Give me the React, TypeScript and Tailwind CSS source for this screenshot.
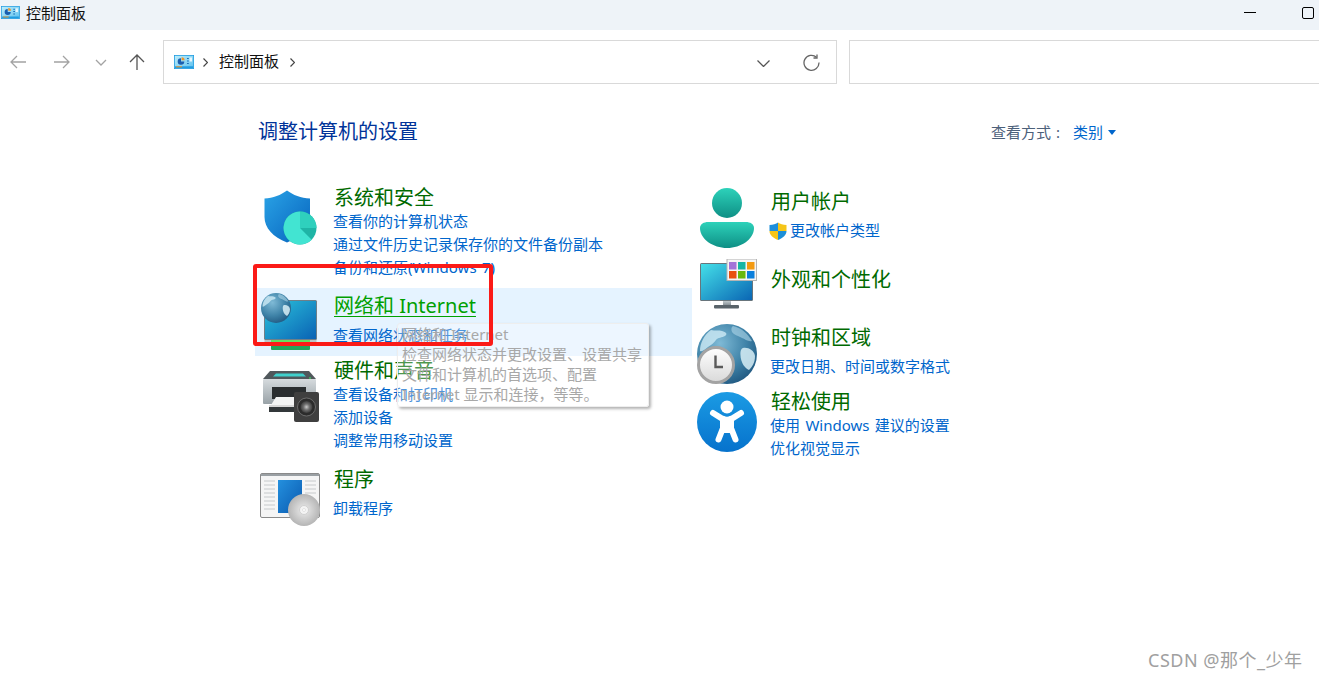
import React from "react";

const Panel = ({ id, className }: { id: string; className: string }) => (
  <svg viewBox="0 0 20 14" className={className}>
    <defs>
      <linearGradient id={id} x1="0" y1="0" x2="1" y2="1">
        <stop offset="0" stopColor="#bfeefb" />
        <stop offset="1" stopColor="#5cc0ee" />
      </linearGradient>
    </defs>
    <rect x="0.4" y="0.4" width="19.2" height="13.2" fill={`url(#${id})`} stroke="#1f9be0" strokeWidth="0.8" />
    <path d="M7 3.200a3.300 3.300 0 1 0 3.300 3.300H7z" fill="#1a5fb0" />
    <path d="M7.600 2.200a3 3 0 0 1 3 3H7.600z" fill="#f0962a" />
    <path d="M13 3.500h1.800M13 6h1.800M13 8.500h1.800" stroke="#1a6fb8" strokeWidth="1.100" />
    <rect x="15.500" y="2.500" width="2.500" height="4" fill="#e8f6fc" />
    <rect x="1" y="11.300" width="18" height="1.800" fill="#1f9be0" />
    <rect x="2" y="11.300" width="6" height="1" fill="#f0962a" />
  </svg>
);

const Shield = () => (
  <svg viewBox="0 0 56 56" className="w-[56px] h-[56px]">
    <defs>
      <linearGradient id="sh1" x1="0" y1="0" x2="1" y2="1">
        <stop offset="0" stopColor="#2aa3e6" />
        <stop offset="1" stopColor="#0662bd" />
      </linearGradient>
    </defs>
    <path d="M24 0.5C18 5 10 8 1.5 8.5V27C1.5 38 10 47 24 52.5C38 47 47 38 47 27V8.5C38 8 30 5 24 0.5Z" fill="url(#sh1)" />
    <circle cx="37" cy="38" r="16.5" fill="#1fb5a6" />
    <path d="M37 21.5A16.5 16.5 0 0 1 53.5 38H37Z" fill="#2fd0bd" />
    <path d="M37 38V21.5A16.5 16.5 0 1 0 48.7 49.700Z" fill="#42e4d2" />
  </svg>
);

const Globe = ({ id, className }: { id: string; className: string }) => (
  <svg viewBox="0 0 60 60" className={className}>
    <defs>
      <radialGradient id={id} cx="0.38" cy="0.32" r="0.8">
        <stop offset="0" stopColor="#7fbad6" />
        <stop offset="0.55" stopColor="#3f83a8" />
        <stop offset="1" stopColor="#1a4f78" />
      </radialGradient>
    </defs>
    <circle cx="30" cy="30" r="30" fill={`url(#${id})`} />
    <path d="M14 6c4 1 8 0 11 1 4 1 6 3 3 5-3 2-7 1-9 4-2 3-5 5-8 7-3 2-5 5-8 4 0-8 4-16 11-21z" fill="#c8e6f2" opacity="0.85" />
    <path d="M36 2c9 2 15 8 19 15-4 1-7-2-10-3-3-2-8-3-10-6-1-2-1-5 1-6z" fill="#b9dfee" opacity="0.55" />
    <path d="M46 24c5-1 11 2 12 8 0 7-3 11-6 14-4-2-7-6-8-11-1-5-1-10 2-11z" fill="#d8eef6" opacity="0.85" />
  </svg>
);

const NetworkIcon = () => (
  <div className="relative w-[58px] h-[58px]">
    <svg viewBox="0 0 58 58" className="w-full h-full">
      <defs>
        <linearGradient id="nt1" x1="0" y1="0" x2="1" y2="1">
          <stop offset="0" stopColor="#2bc4dc" />
          <stop offset="1" stopColor="#0a62b4" />
        </linearGradient>
      </defs>
      <rect x="3.5" y="47" width="52" height="4" fill="#bcc4c8" />
      <rect x="10" y="47" width="39" height="4" fill="#62e060" />
      <rect x="10" y="51" width="39" height="6" rx="1" fill="#22a55a" />
      <rect x="3" y="7" width="53" height="40" rx="1.5" fill="#6f7f88" />
      <rect x="4" y="8" width="51" height="38" fill="url(#nt1)" />
    </svg>
    <Globe id="gl1" className="absolute left-0 top-0 w-[30px] h-[30px]" />
  </div>
);

const Printer = () => (
  <svg viewBox="0 0 58 52" className="w-[58px] h-[52px]">
    <defs>
      <linearGradient id="pr1" x1="0" y1="0" x2="0" y2="1">
        <stop offset="0" stopColor="#d6dbde" />
        <stop offset="1" stopColor="#99a2a7" />
      </linearGradient>
      <radialGradient id="pr2">
        <stop offset="0" stopColor="#c9c9c9" />
        <stop offset="0.5" stopColor="#6f6f6f" />
        <stop offset="1" stopColor="#3c3c3c" />
      </radialGradient>
    </defs>
    <path d="M7 0h39l7 8H0z" fill="#50585c" />
    <path d="M13 2.500h27l3 3H10z" fill="#3fd0cc" />
    <circle cx="47" cy="7" r="1" fill="#3fc060" />
    <rect x="0" y="8" width="53" height="25" rx="1" fill="url(#pr1)" />
    <rect x="9" y="16" width="34" height="12" fill="#2a2e30" />
    <path d="M13 26h29l5 8H8z" fill="#f3f4f4" />
    <rect x="6" y="34" width="40" height="2" fill="#d8d8d8" />
    <rect x="6" y="36" width="40" height="5" fill="#33383a" />
    <rect x="31" y="21" width="25" height="30" rx="2" fill="#3f3f3f" />
    <circle cx="43.500" cy="36" r="9" fill="#2c2c2c" stroke="#777" strokeWidth="0.8" />
    <circle cx="43.500" cy="36" r="6" fill="url(#pr2)" />
  </svg>
);

const Programs = () => (
  <svg viewBox="0 0 60 53" className="w-[60px] h-[53px]">
    <defs>
      <linearGradient id="pg1" x1="0" y1="0" x2="1" y2="1">
        <stop offset="0" stopColor="#2490de" />
        <stop offset="1" stopColor="#0a5ab0" />
      </linearGradient>
      <radialGradient id="pg2">
        <stop offset="0" stopColor="#ffffff" />
        <stop offset="0.3" stopColor="#dcdcdc" />
        <stop offset="1" stopColor="#b5b5b5" />
      </radialGradient>
    </defs>
    <rect x="0.500" y="0.500" width="59" height="44" rx="1.500" fill="#f5f5f5" stroke="#8a8a8a" />
    <rect x="1" y="1" width="58" height="2" fill="#9aa0a4" />
    <path d="M4 8h11M4 12h11M4 16h11M4 20h11M4 24h11M4 28h11M4 32h11M4 36h11M45 8h11M45 12h11M45 16h11M45 20h11M45 24h5" stroke="#c6c9cb" strokeWidth="1" />
    <rect x="18" y="7" width="24" height="33" fill="url(#pg1)" />
    <circle cx="44" cy="37" r="16" fill="url(#pg2)" />
    <circle cx="44" cy="37" r="4.500" fill="#f4f4f4" stroke="#d0d0d0" />
    <circle cx="44" cy="37" r="1.500" fill="#fff" stroke="#ccc" strokeWidth="0.5" />
  </svg>
);

const UserIcon = () => (
  <svg viewBox="0 0 54 60" className="w-[54px] h-[60px]">
    <defs>
      <linearGradient id="us1" x1="0" y1="0" x2="0" y2="1">
        <stop offset="0" stopColor="#2dd2ba" />
        <stop offset="1" stopColor="#0e8f85" />
      </linearGradient>
    </defs>
    <circle cx="27" cy="15" r="15" fill="url(#us1)" />
    <path d="M8 34h38c4 0 8 2 8 6 0 11-13 20-27 20S0 51 0 40c0-4 4-6 8-6z" fill="url(#us1)" />
  </svg>
);

const UacShield = () => (
  <svg viewBox="0 0 18 18" className="w-[18px] h-[18px] shrink-0">
    <path d="M9 .5V9H.5V3C4 3 7 2 9 .5z" fill="#1d8fdc" />
    <path d="M9 .5C11 2 14 3 17.500 3v6H9z" fill="#f5c518" />
    <path d="M9 9H.5C.5 13 4 16 9 18z" fill="#f5c518" />
    <path d="M9 9h8.500c0 4-3.500 7-8.500 9z" fill="#1c8fd8" />
  </svg>
);

const Appearance = () => (
  <svg viewBox="0 0 57 50" className="w-[57px] h-[50px]">
    <defs>
      <linearGradient id="ap1" x1="0" y1="0" x2="1" y2="1">
        <stop offset="0" stopColor="#44dfe8" />
        <stop offset="1" stopColor="#0a66b4" />
      </linearGradient>
      <linearGradient id="ap2" x1="0" y1="0" x2="0" y2="1">
        <stop offset="0" stopColor="#c0c8cc" />
        <stop offset="1" stopColor="#7c868c" />
      </linearGradient>
    </defs>
    <rect x="0" y="4" width="53" height="38" rx="1.500" fill="#68757c" />
    <rect x="1" y="5" width="51" height="36" fill="url(#ap1)" />
    <rect x="23" y="42" width="8" height="5" fill="url(#ap2)" />
    <rect x="14" y="46" width="25" height="3.500" rx="1" fill="#59636a" />
    <rect x="27" y="0" width="29.500" height="21.500" fill="#f5f5f5" stroke="#b4b4b4" />
    <rect x="29" y="3" width="7.500" height="7.500" fill="#a374d8" />
    <rect x="38" y="3" width="7.500" height="7.500" fill="#16b5a4" />
    <rect x="47" y="3" width="7.500" height="7.500" fill="#f39a12" />
    <rect x="29" y="12" width="7.500" height="7.500" fill="#e8500f" />
    <rect x="38" y="12" width="7.500" height="7.500" fill="#68b80f" />
    <rect x="47" y="12" width="7.500" height="7.500" fill="#0a7fdc" />
  </svg>
);

const ClockIcon = () => (
  <div className="relative w-[60px] h-[60px]">
    <Globe id="gl2" className="w-[60px] h-[60px]" />
    <svg viewBox="0 0 38 38" className="absolute left-0 bottom-0 w-[38px] h-[38px]">
      <defs>
        <linearGradient id="cl1" x1="0" y1="0" x2="0" y2="1">
          <stop offset="0" stopColor="#ffffff" />
          <stop offset="1" stopColor="#d9d9d9" />
        </linearGradient>
      </defs>
      <circle cx="19" cy="19" r="17.500" fill="url(#cl1)" stroke="#a3a3a3" strokeWidth="3" />
      <path d="M18.500 9.500V21H26" fill="none" stroke="#5a5a5a" strokeWidth="2.400" />
    </svg>
  </div>
);

const Access = () => (
  <svg viewBox="0 0 60 60" className="w-[60px] h-[60px]">
    <defs>
      <linearGradient id="ac1" x1="0" y1="0" x2="0" y2="1">
        <stop offset="0" stopColor="#1b9be4" />
        <stop offset="1" stopColor="#0672cc" />
      </linearGradient>
    </defs>
    <circle cx="30" cy="30" r="30" fill="url(#ac1)" />
    <circle cx="30" cy="15" r="6.500" fill="#fff" />
    <path d="M16 21l9 5.500c3 1.500 7 1.500 10 0L44 21" fill="none" stroke="#fff" strokeWidth="6" strokeLinecap="round" />
    <path d="M26 27v9l-4.500 11.500M34 27v9l4.500 11.500M26 30h8v8h-8z" fill="#fff" stroke="#fff" strokeWidth="6" strokeLinecap="round" strokeLinejoin="round" />
  </svg>
);

const TITLE = "h-[26px] leading-[28px] text-[20px] text-[#006a00]";
const LINK = "h-[23px] leading-[23px] text-[15px] text-[#0066cc] -ml-[1px] [word-spacing:1.5px]";

const Text = ({ title, links, active }: { title: string; links: string[]; active?: boolean }) => (
  <div className="flex flex-col">
    <div className={active ? "h-[26px] leading-[26px] text-[20px] text-[#00a000] underline underline-offset-[3px] decoration-1" : TITLE}>{title}</div>
    <div className={links.length === 1 ? "mt-[5px]" : ""}>
      {links.map((l) => (
        <div key={l} className={LINK}>{l}</div>
      ))}
    </div>
  </div>
);

export default function App() {
  return (
    <div className="relative w-[1319px] h-[679px] overflow-hidden bg-white font-['Noto_Sans','Noto_Sans_CJK_SC',sans-serif]">
      <header className="h-[30px] bg-[#eef3f8] flex items-center pl-[1px] pb-[5px]">
        <Panel id="p1" className="w-[19px] h-[13px]" />
        <span className="ml-[6px] text-[15px] leading-[20px] text-[#111]">控制面板</span>
        <div className="ml-auto flex items-center">
          <div className="w-[12px] h-[1px] bg-black" />
          <div className="ml-[46px] mr-[5px] w-[12px] h-[12px] rounded-[2px] border border-black" />
        </div>
      </header>

      <div className="h-[54px] pt-[10px] flex">
        <div className="w-[163px] h-[44px] flex items-center text-[#a3a3a3]">
          <svg viewBox="0 0 16 14" className="ml-[10px] w-[16px] h-[14px]" fill="none" stroke="currentColor" strokeWidth="1.300"><path d="M16 7H1M7 1L1 7l6 6" /></svg>
          <svg viewBox="0 0 16 14" className="ml-[28px] w-[16px] h-[14px]" fill="none" stroke="currentColor" strokeWidth="1.300"><path d="M0 7h15M9 1l6 6-6 6" /></svg>
          <svg viewBox="0 0 12 7" className="ml-[25px] w-[12px] h-[7px]" fill="none" stroke="currentColor" strokeWidth="1.300"><path d="M1 1l5 5 5-5" /></svg>
          <svg viewBox="0 0 16 16" className="ml-[22px] w-[16px] h-[16px] text-[#555]" fill="none" stroke="currentColor" strokeWidth="1.300"><path d="M8 16V1M1 8l7-7 7 7" /></svg>
        </div>
        <div className="w-[674px] h-[44px] border border-[#d9d9d9] flex items-center">
          <Panel id="p2" className="ml-[10px] w-[20px] h-[14px]" />
          <svg viewBox="0 0 5 9" className="ml-[9px] w-[5px] h-[9px]" fill="none" stroke="#444" strokeWidth="1.200"><path d="M.5.500l4 4-4 4" /></svg>
          <span className="ml-[11px] mb-[2px] text-[15px] leading-[20px] text-[#111]">控制面板</span>
          <svg viewBox="0 0 5 9" className="ml-[11px] w-[5px] h-[9px]" fill="none" stroke="#444" strokeWidth="1.200"><path d="M.5.500l4 4-4 4" /></svg>
          <svg viewBox="0 0 13 7" className="ml-auto mt-[2px] w-[13px] h-[7px]" fill="none" stroke="#555" strokeWidth="1.300"><path d="M.5.500l6 6 6-6" /></svg>
          <svg viewBox="0 0 17 17" className="ml-[33px] mr-[16px] w-[17px] h-[17px]" fill="none" stroke="#666" strokeWidth="1.300">
            <path d="M13.500 3.200A7.500 7.500 0 1 0 16 8.500" />
            <path d="M14 .5v3.500h-3.500" />
          </svg>
        </div>
        <div className="ml-[12px] flex-1 h-[44px] border border-[#d9d9d9] border-r-0" />
      </div>

      <main className="pt-[34px]">
        <div className="h-[28px] pl-[258px] pr-[203px] flex items-center">
          <h1 className="text-[20px] leading-[32px] text-[#003399]">调整计算机的设置</h1>
          <span className="ml-auto text-[15px] text-[#4c607a]">查看方式</span>
          <span className="ml-[5px] text-[15px] text-[#4c607a]">:</span>
          <span className="ml-[13px] text-[15px] text-[#0066cc]">类别</span>
          <span className="ml-[5px] w-0 h-0 border-x-[4px] border-x-transparent border-t-[5px] border-t-[#0066cc]" />
        </div>

        <div className="pl-[255px] flex mt-[38px]">
          <div className="w-[437px] flex flex-col">
            <section className="h-[104px] flex gap-[12px]">
              <div className="w-[67px] pl-[8px] pt-[6px]"><Shield /></div>
              <Text title="系统和安全" links={["查看你的计算机状态", "通过文件历史记录保存你的文件备份副本", "备份和还原(Windows 7)"]} />
            </section>
            <section className="h-[68px] flex gap-[12px] pt-[5px] bg-[#e5f3ff]">
              <div className="w-[67px] pl-[6px]"><NetworkIcon /></div>
              <Text active title="网络和 Internet" links={["查看网络状态和任务"]} />
            </section>
            <section className="h-[109px] flex gap-[12px] pt-[1px]">
              <div className="w-[67px] pl-[8px] pt-[14px]"><Printer /></div>
              <Text title="硬件和声音" links={["查看设备和打印机", "添加设备", "调整常用移动设置"]} />
            </section>
            <section className="flex gap-[12px] pt-[1px]">
              <div className="w-[67px] pl-[5px] pt-[7px]"><Programs /></div>
              <Text title="程序" links={["卸载程序"]} />
            </section>
          </div>

          <div className="ml-[5px] pt-[4px] flex flex-col">
            <section className="h-[70px] flex gap-[14px]">
              <div className="w-[60px] pl-[3px]"><UserIcon /></div>
              <div className="flex flex-col">
                <div className={TITLE}>用户帐户</div>
                <div className="mt-[5px] ml-[-2px] flex items-center gap-[4px]">
                  <UacShield />
                  <div className={LINK}>更改帐户类型</div>
                </div>
              </div>
            </section>
            <section className="h-[66px] flex gap-[14px]">
              <div className="w-[60px] pl-[3px] pt-[1px]"><Appearance /></div>
              <div className="pt-[8px]"><div className={TITLE}>外观和个性化</div></div>
            </section>
            <section className="h-[64px] flex gap-[14px]">
              <div className="w-[60px]"><ClockIcon /></div>
              <Text title="时钟和区域" links={["更改日期、时间或数字格式"]} />
            </section>
            <section className="flex gap-[14px]">
              <div className="w-[60px] pt-[4px]"><Access /></div>
              <Text title="轻松使用" links={["使用 Windows 建议的设置", "优化视觉显示"]} />
            </section>
          </div>
        </div>
      </main>

      <div className="absolute left-[397px] top-[323px] w-[252px] h-[84px] rounded-[3px] border border-[#eeeeee] bg-[#ffffff]/30 shadow-[2px_2px_3px_rgba(0,0,0,0.3)] pl-[4px] text-[15px] leading-[20px] text-[#a8a8a8]">
        <div>网络和 Internet</div>
        <div>检查网络状态并更改设置、设置共享</div>
        <div>文件和计算机的首选项、配置</div>
        <div>Internet 显示和连接，等等。</div>
      </div>

      <div className="absolute left-[253px] top-[264px] w-[240px] h-[82px] rounded-[3px] border-4 border-[#fb1a17]" />

      <div className="absolute left-[1148px] top-[648px] text-[18px] leading-[24px] tracking-[0.5px] text-[#a0a0a0]">CSDN @那个_少年</div>
    </div>
  );
}
